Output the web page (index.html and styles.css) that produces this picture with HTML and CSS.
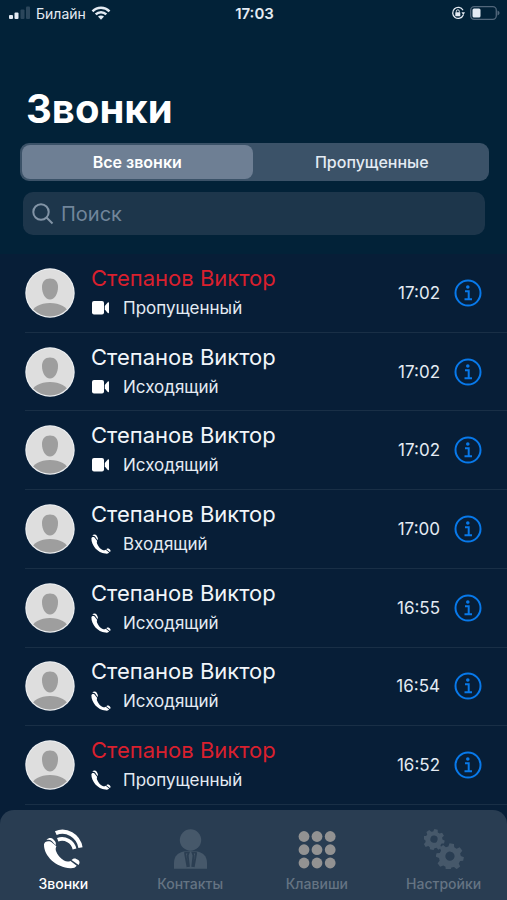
FILE: index.html
```html
<!DOCTYPE html>
<html lang="ru">
<head>
<meta charset="utf-8">
<meta name="viewport" content="width=device-width, initial-scale=1">
<title>Звонки</title>
<link rel="stylesheet" href="styles.css">
</head>
<body>
<svg class="sprite" aria-hidden="true">
  <symbol id="avatar" viewBox="0 0 50 50">
    <clipPath id="avatar-clip"><circle cx="25" cy="25" r="23.5"/></clipPath>
    <circle cx="25" cy="25" r="24.7" fill="#eef1f4"/>
    <circle cx="25" cy="25" r="23.7" fill="#dedede"/>
    <path d="M25 10.500c5 0 8 3.200 8 8.500 0 6.500-3.200 12.500-8 12.500s-8-6-8-12.500c0-5.300 3-8.500 8-8.500z" fill="#9e9e9e"/>
    <ellipse cx="25" cy="45" rx="18" ry="10" fill="#9e9e9e" clip-path="url(#avatar-clip)"/>
  </symbol>
  <symbol id="video" viewBox="0 0 20 20">
    <rect x="1" y="3" width="12" height="13.500" rx="2"/>
    <path d="M13.800 8l3-3.600c.6-.5 1.200-.2 1.200.5v9.600c0 .7-.6 1-1.200.5l-3-3.600z"/>
  </symbol>
  <symbol id="phone" viewBox="0 0 20 20">
    <path d="M.4 4.200C.2 11.500 6.800 18.800 14.300 19.600c1.600.2 2.900-.1 3.900-1.100l-3.500-2.700c-1 .6-2 .7-3 .2-2.500-1.300-4.600-3.600-5.700-6.600-.3-.9-.3-1.700.2-2.400L3.300 3.200C2 2.600.8 2.900.4 4.200z"/>
    <path d="M1.200 1.900C2.300.3 4.500.2 5.600 1.600l1 1.900c.5.900.4 1.800-.2 2.600L4.100 2.500C3.200 1.700 2.200 1.500 1.200 1.900zM15.300 15.200l.9-.6c.6-.3 1.200-.2 1.700.1l1 .7c.9.800.9 1.800 0 2.700z"/>
  </symbol>
  <symbol id="info" viewBox="0 0 28 28">
    <circle cx="14" cy="14" r="12.500" fill="none" stroke="currentColor" stroke-width="2"/>
    <circle cx="13.800" cy="8" r="1.800"/>
    <path d="M11 12.200h3.700v8M10.500 20.200h7.500" fill="none" stroke="currentColor" stroke-width="2"/>
  </symbol>
  <symbol id="tooth-ring" viewBox="-14 -14 28 28">
    <path fill-rule="evenodd" d="M-2.200-12.500h4.400l.8 3.300 2.500 1 2.900-1.700 3.100 3.100-1.800 2.900 1 2.300 3.300.8v3.600l-3.300.8-1 2.500 1.800 2.900-3.100 3.100-2.900-1.800-2.500 1-.8 3.300h-4.400l-.8-3.300-2.300-1-3 1.800-3-3.100 1.700-2.900-1-2.500-3.300-.8v-3.600l3.300-.8 1-2.300-1.700-2.900 3-3.100 3 1.700 2.300-1zM0-4.400a4.600 4.600 0 1 0 0 9.200 4.600 4.600 0 1 0 0-9.200z"/>
  </symbol>
</svg>

<div class="screen">
  <header class="top">
    <div class="status">
      <div class="carrier">
        <svg class="signal" viewBox="0 0 22 14" aria-hidden="true"><rect x="0" y="9" width="4" height="4" rx="1"/><rect x="5.500" y="6.500" width="4" height="6.500" rx="1"/><rect class="off" x="11.500" y="3.500" width="4" height="9.500" rx="1"/><rect class="off" x="17" y="0.500" width="4" height="12.500" rx="1"/></svg>
        <span>Билайн</span>
        <svg class="wifi" viewBox="0 0 20 14" aria-hidden="true"><path d="M1.500 5.300C6.300.6 13.700.6 18.500 5.300M4.700 8.300c3-2.900 7.600-2.900 10.600 0" fill="none" stroke="currentColor" stroke-width="2.500"/><path d="M10 13.800l-3-3.200c1.700-1.500 4.300-1.500 6 0z"/></svg>
      </div>
      <time class="clock">17:03</time>
      <div class="power">
        <svg class="lock" viewBox="0 0 14 14" aria-hidden="true"><path d="M12 4.200A5.500 5.500 0 1 0 12.300 9" fill="none" stroke="currentColor" stroke-width="1.300"/><path d="M10.500 6.200h3.500l-1.700 3z"/><rect x="4.300" y="6.300" width="5" height="4" rx=".5"/><path d="M5.300 6.500V5.300a1.500 1.500 0 0 1 3 0v1.200" fill="none" stroke="currentColor"/></svg>
        <svg class="battery" viewBox="0 0 30 14" aria-hidden="true"><rect x=".7" y=".7" width="25.600" height="12.600" rx="3.500" fill="none" stroke="#52677b" stroke-width="1.300"/><path d="M27.500 4.500c1.200.4 2 1.300 2 2.500s-.8 2.100-2 2.500z" fill="#52677b"/><rect x="2.500" y="2.500" width="8" height="9" rx="1.500"/></svg>
      </div>
    </div>
    <h1>Звонки</h1>
    <div class="segments">
      <button class="segment selected" type="button" aria-pressed="true">Все звонки</button>
      <button class="segment" type="button" aria-pressed="false">Пропущенные</button>
    </div>
    <label class="search">
      <svg viewBox="0 0 22 22" aria-hidden="true"><circle cx="9" cy="9" r="7.700"/><path d="M14.500 14.500l6 6"/></svg>
      <input type="search" placeholder="Поиск" aria-label="Поиск">
    </label>
  </header>

  <main class="calls">
    <article class="call missed">
      <svg class="avatar" aria-hidden="true"><use href="#avatar"/></svg>
      <div class="who"><h2>Степанов Виктор</h2><p><svg aria-hidden="true"><use href="#video"/></svg>Пропущенный</p></div>
      <time>17:02</time>
      <button class="info" type="button" aria-label="Сведения"><svg aria-hidden="true"><use href="#info"/></svg></button>
    </article>
    <article class="call">
      <svg class="avatar" aria-hidden="true"><use href="#avatar"/></svg>
      <div class="who"><h2>Степанов Виктор</h2><p><svg aria-hidden="true"><use href="#video"/></svg>Исходящий</p></div>
      <time>17:02</time>
      <button class="info" type="button" aria-label="Сведения"><svg aria-hidden="true"><use href="#info"/></svg></button>
    </article>
    <article class="call">
      <svg class="avatar" aria-hidden="true"><use href="#avatar"/></svg>
      <div class="who"><h2>Степанов Виктор</h2><p><svg aria-hidden="true"><use href="#video"/></svg>Исходящий</p></div>
      <time>17:02</time>
      <button class="info" type="button" aria-label="Сведения"><svg aria-hidden="true"><use href="#info"/></svg></button>
    </article>
    <article class="call">
      <svg class="avatar" aria-hidden="true"><use href="#avatar"/></svg>
      <div class="who"><h2>Степанов Виктор</h2><p><svg aria-hidden="true"><use href="#phone"/></svg>Входящий</p></div>
      <time>17:00</time>
      <button class="info" type="button" aria-label="Сведения"><svg aria-hidden="true"><use href="#info"/></svg></button>
    </article>
    <article class="call">
      <svg class="avatar" aria-hidden="true"><use href="#avatar"/></svg>
      <div class="who"><h2>Степанов Виктор</h2><p><svg aria-hidden="true"><use href="#phone"/></svg>Исходящий</p></div>
      <time>16:55</time>
      <button class="info" type="button" aria-label="Сведения"><svg aria-hidden="true"><use href="#info"/></svg></button>
    </article>
    <article class="call">
      <svg class="avatar" aria-hidden="true"><use href="#avatar"/></svg>
      <div class="who"><h2>Степанов Виктор</h2><p><svg aria-hidden="true"><use href="#phone"/></svg>Исходящий</p></div>
      <time>16:54</time>
      <button class="info" type="button" aria-label="Сведения"><svg aria-hidden="true"><use href="#info"/></svg></button>
    </article>
    <article class="call missed">
      <svg class="avatar" aria-hidden="true"><use href="#avatar"/></svg>
      <div class="who"><h2>Степанов Виктор</h2><p><svg aria-hidden="true"><use href="#phone"/></svg>Пропущенный</p></div>
      <time>16:52</time>
      <button class="info" type="button" aria-label="Сведения"><svg aria-hidden="true"><use href="#info"/></svg></button>
    </article>
  </main>

  <nav class="tabs">
    <a class="tab current" href="#calls" aria-current="page">
      <svg viewBox="0 0 40 40" aria-hidden="true">
        <path d="M1 15.500C.8 27 13 38.500 27.500 39.300c3 .1 4.900-.7 6.200-2.500L27.500 32c-2.300.9-4.500.7-6.500-.5-4-2.400-6.700-5.500-8-9.500-.5-1.600-.4-3.200.4-4.700L8 12.700C4.500 11.500 1.500 12.500 1 15.500z"/>
        <path d="M3.500 11c2-2.300 5-2.500 7-.6l1.500 1.900c1 1.300 1.100 2.500.5 3.900L8.800 11.900C7.200 10.800 5.400 10.500 3.500 11zM28.500 31l1.800-1.200c1-.5 2-.4 3 .1l2 1.200c1.500 1.200 1.700 2.900.3 5z"/>
        <path d="M12.800 4.200C23-.3 35.500 6.500 37.500 18.700" fill="none" stroke="currentColor" stroke-width="4.200"/>
        <path d="M14.700 10.700C22 7.900 30 12.700 31.500 20" fill="none" stroke="currentColor" stroke-width="3.800"/>
      </svg>
      Звонки
    </a>
    <a class="tab" href="#contacts">
      <svg viewBox="0 0 40 40" aria-hidden="true">
        <circle cx="20.500" cy="11" r="10.700"/>
        <path d="M4 39.700V34c0-7 4.500-11 11-11.700h11C32.500 23 37 27 37 34v5.700z"/>
        <path d="M14.300 23.700h4.400l-1 2.700 1.300 11.500M26.800 23.700h-4.300l1 2.700-1.300 11.500M15 24l2.500 14M26.200 24l-2.500 14" fill="none" stroke="#2b3e52" stroke-width="1.800"/>
      </svg>
      Контакты
    </a>
    <a class="tab keys" href="#keypad">
      <svg viewBox="0 0 40 40" aria-hidden="true">
        <circle cx="7" cy="7.500" r="5.400"/><circle cx="20" cy="7.500" r="5.400"/><circle cx="33.200" cy="7.500" r="5.400"/>
        <circle cx="7" cy="20.700" r="5.400"/><circle cx="20" cy="20.700" r="5.400"/><circle cx="33.200" cy="20.700" r="5.400"/>
        <circle cx="7" cy="34" r="5.400"/><circle cx="20" cy="34" r="5.400"/><circle cx="33.200" cy="34" r="5.400"/>
      </svg>
      Клавиши
    </a>
    <a class="tab" href="#settings">
      <svg viewBox="0 0 40 40" aria-hidden="true">
        <use href="#tooth-ring" x="-1" y="-1" width="22" height="22" transform="rotate(12 10 10)"/>
        <use href="#tooth-ring" x="12" y="13" width="28" height="28" transform="rotate(8 26 27)"/>
      </svg>
      Настройки
    </a>
  </nav>
</div>
</body>
</html>
```
FILE: styles.css
```css
* { box-sizing: border-box; }

body {
  margin: 0;
  background: #071e37;
  color: #e4ebf3;
  font-family: Inter, "Noto Sans", sans-serif;
}

svg { display: block; flex: none; fill: currentColor; }
.sprite { position: absolute; width: 0; height: 0; }
h1, h2, p { margin: 0; }
button, input { font: inherit; color: inherit; border: 0; }

.screen { min-height: 100vh; display: flex; flex-direction: column; }

.top {
  background: #022238;
  padding: 0 18px 19px 20px;
}

.status {
  display: grid;
  grid-template-columns: 1fr auto 1fr;
  align-items: center;
  height: 26px;
  margin: 0 -11px;
  font-size: 14px;
}
.carrier, .power { display: flex; align-items: center; gap: 5px; }
.power { justify-content: flex-end; }
.signal { width: 22px; height: 14px; }
.signal .off { fill: #2b465b; }
.wifi { width: 20px; height: 14px; }
.clock { font-size: 15px; font-weight: 600; }
.lock { width: 14px; height: 14px; }
.battery { width: 30px; height: 14px; }

h1 {
  margin: 58px 6px 10px;
  font-size: 40px;
  line-height: 49px;
  font-weight: 700;
  color: #fff;
}

.segments {
  display: grid;
  grid-template-columns: 1fr 1fr;
  gap: 4px;
  padding: 2px;
  border-radius: 9px;
  background: #3b5268;
}
.segment {
  height: 34px;
  padding: 0 4px;
  border-radius: 8px;
  background: none;
  font-size: 16px;
  font-weight: 500;
}
.segment.selected { background: #6e7f94; color: #fff; font-weight: 600; }

.search {
  display: flex;
  align-items: center;
  gap: 7px;
  height: 43px;
  margin: 11px 4px 0 3px;
  padding: 0 9px;
  border-radius: 10px;
  background: #1d364b;
  color: #8294a6;
}
.search svg { width: 22px; height: 22px; fill: none; stroke: currentColor; stroke-width: 2; }
.search input {
  flex: 1;
  min-width: 0;
  padding: 0;
  background: none;
  outline: 0;
  font-size: 20px;
}
.search input::placeholder { color: #71859a; opacity: 1; }

.calls {
  flex: 1;
  display: grid;
  grid-auto-rows: 1fr;
  padding: 0 0 5px 25px;
}
.call {
  display: flex;
  align-items: center;
  padding-right: 25px;
  border-bottom: 1px solid #192f46;
}
.avatar { width: 50px; height: 50px; }
.who { flex: 1; min-width: 0; padding: 1px 0 0 16px; }
.who h2 { font-size: 22px; line-height: 29px; font-weight: 400; color: #f2f6fa; }
.missed h2 { color: #d9202e; }
.who p {
  display: flex;
  align-items: center;
  gap: 12px;
  font-size: 17px;
  line-height: 30px;
}
.who p svg { width: 20px; height: 20px; color: #fff; }
.call time { font-size: 17px; }
.info {
  margin-left: 14px;
  padding: 0;
  background: none;
  color: #0879ea;
}
.info svg { width: 28px; height: 28px; }

.tabs {
  display: grid;
  grid-template-columns: repeat(4, 1fr);
  height: 90px;
  padding-top: 19px;
  border-radius: 14px 14px 0 0;
  background: #293d52;
}
.tab {
  display: flex;
  flex-direction: column;
  align-items: center;
  gap: 6px;
  color: #657483;
  font-size: 14px;
  line-height: 18px;
  font-weight: 500;
  text-decoration: none;
}
.tab svg { width: 40px; height: 40px; color: #46586a; }
.tab.keys svg { color: #929292; }
.tab.current, .tab.current svg { color: #fff; }
```
